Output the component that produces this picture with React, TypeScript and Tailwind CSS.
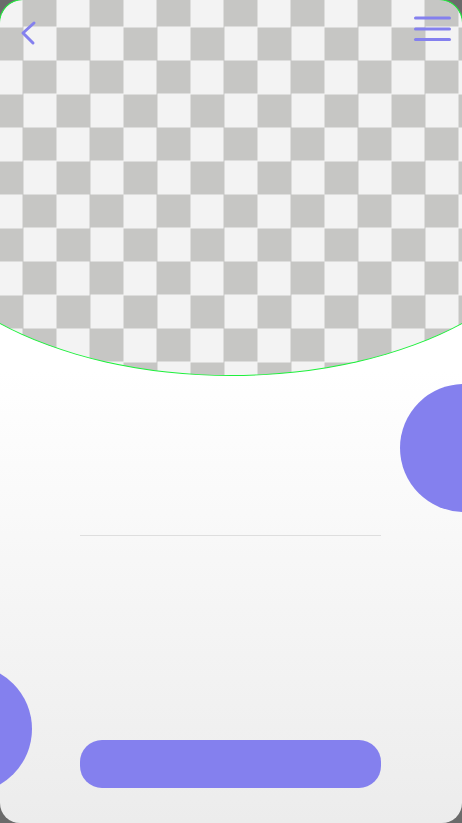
import React from "react";

const PURPLE = "#8480ee";

export default function App() {
  return (
    <div className="relative h-[823px] w-[462px] overflow-hidden bg-[#6b6b6b] font-['Liberation_Sans',sans-serif]">
      <div className="relative flex h-[823px] w-full flex-col rounded-t-[23px] rounded-b-[20px] bg-gradient-to-b from-white from-[45%] to-[#ececec]">
        {/* Header image placeholder */}
        <div className="relative h-[376px] w-full shrink-0 overflow-hidden rounded-t-[23px]">
          <div className="absolute left-[-99px] top-0 h-[376px] w-[660px] rounded-bl-[330px_182px] rounded-br-[330px_182px] border-x border-b border-[#1ef03c] bg-[image:repeating-conic-gradient(#c6c6c4_0_25%,#f3f3f3_0_50%)] bg-[length:67px_67px] bg-[position:87.5px_-6.5px]" />
        </div>
        {/* green corner arcs */}
        <div className="pointer-events-none absolute left-[-1px] right-[-1px] top-[-1px] h-[40px] rounded-t-[24px] border-x border-t border-[#1ef03c]" />

        {/* Top bar icons */}
        <div className="absolute inset-x-0 top-0 flex justify-between">
          <button className="ml-[18px] mt-[18px]" aria-label="Back">
            <svg width="24" height="28" viewBox="0 0 24 28" fill="none">
              <polyline
                points="16,4 5,14 15,24"
                stroke={PURPLE}
                strokeWidth="3"
                strokeLinecap="round"
                strokeLinejoin="round"
              />
            </svg>
          </button>
          <button className="mr-[6px] mt-[10px]" aria-label="Menu">
            <svg width="46" height="38" viewBox="0 0 46 38" fill="none">
              <line x1="5.5" y1="8" x2="39.5" y2="8" stroke={PURPLE} strokeWidth="3" strokeLinecap="round" />
              <line x1="5.5" y1="19" x2="39.5" y2="19" stroke={PURPLE} strokeWidth="3" strokeLinecap="round" />
              <line x1="5.5" y1="29.5" x2="39.5" y2="29.5" stroke={PURPLE} strokeWidth="3" strokeLinecap="round" />
            </svg>
          </button>
        </div>

        {/* Decorative circles */}
        <div className="absolute left-[400px] top-[384px] h-[128px] w-[128px] rounded-full bg-[#8480ee]" />
        <div className="absolute left-[-96px] top-[665px] h-[128px] w-[128px] rounded-full bg-[#8480ee]" />

        {/* Divider */}
        <div className="ml-[80px] mt-[159px] h-px w-[301px] bg-[#dedede]" />

        <div className="flex-1" />

        {/* Button */}
        <button className="mb-[35px] ml-[80px] h-[48px] w-[301px] rounded-[22px] bg-[#8480ee]" />
      </div>
    </div>
  );
}
